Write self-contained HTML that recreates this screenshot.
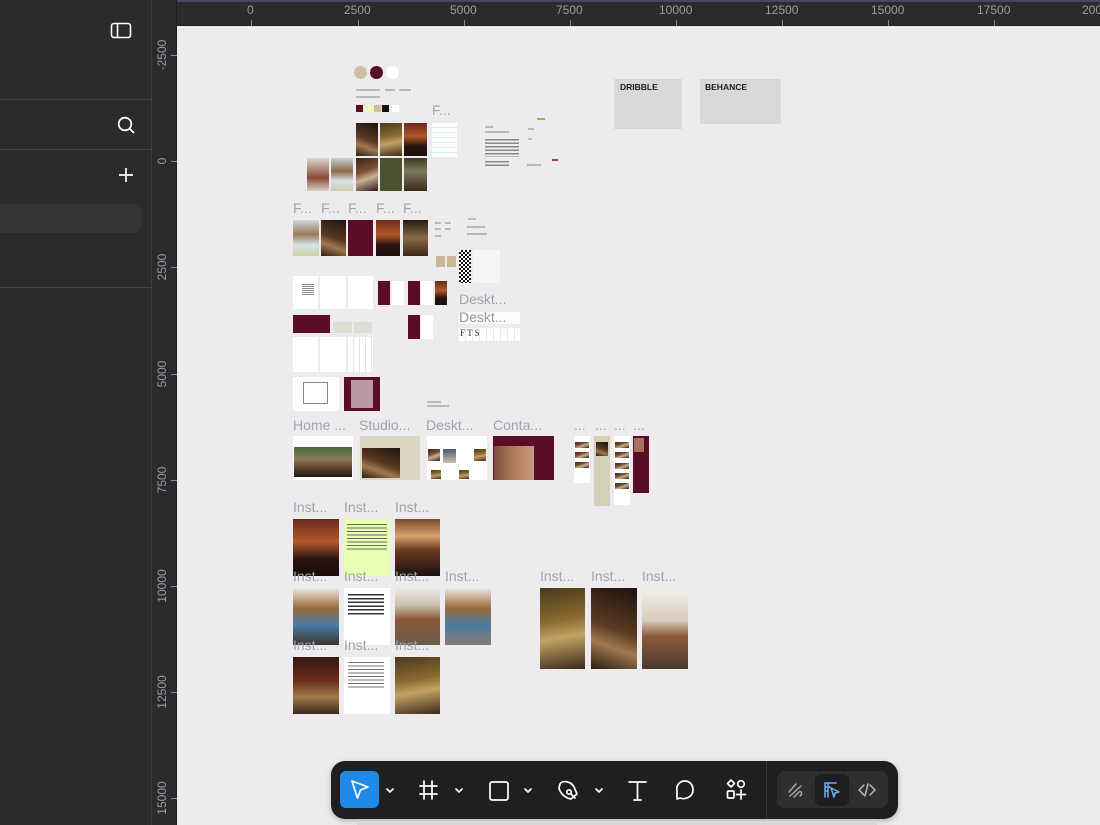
<!DOCTYPE html>
<html><head><meta charset="utf-8"><style>
*{margin:0;padding:0;box-sizing:border-box}
body{width:1100px;height:825px;overflow:hidden;background:#edebee;font-family:"Liberation Sans",sans-serif;position:relative}
.a{position:absolute}
.lbl{position:absolute;color:#a3a2a6;font-size:14px;line-height:14px;white-space:nowrap}
.w{background:#fff}
.m{background:#5b0d26}
.img1{background:linear-gradient(160deg,#3a2418,#7a5236 40%,#c9b092 60%,#2a1c14)}
.img2{background:linear-gradient(200deg,#1b130f,#5c3a22 50%,#a07850 70%,#2b1d14)}
.img3{background:linear-gradient(180deg,#6a2a1c,#b2582a 40%,#2a1410 70%,#1a0d0a)}
.img4{background:linear-gradient(180deg,#f2f0ec,#d9cdbb 40%,#8a5a36 60%,#4a3a30)}
.img5{background:linear-gradient(170deg,#4a3a1c,#8a6a30 40%,#c4a266 60%,#3a2a18)}
.tick{position:absolute;background:#8a898d}
.rt{position:absolute;color:#9d9ca0;font-size:12px;line-height:12px}
.tx{position:absolute;height:2px;background:#b9b7ba}
</style></head><body>
<!-- left panel -->
<div class="a" style="left:0;top:0;width:152px;height:825px;background:#2b2a2d;border-right:1px solid #3c3b3e"></div>
<div class="a" style="left:0;top:99px;width:151px;height:1px;background:#444347"></div>
<div class="a" style="left:0;top:149px;width:151px;height:1px;background:#444347"></div>
<div class="a" style="left:0;top:287px;width:151px;height:1px;background:#444347"></div>
<div class="a" style="left:0;top:204px;width:141px;height:29px;background:#353437;border-radius:0 7px 7px 0"></div>
<svg class="a" style="left:110px;top:22px" width="22" height="17" viewBox="0 0 22 17"><rect x="1.5" y="1.5" width="19" height="14" rx="2.5" fill="none" stroke="#fff" stroke-width="1.6"/><line x1="7.5" y1="2" x2="7.5" y2="15" stroke="#fff" stroke-width="1.6"/></svg>
<svg class="a" style="left:116px;top:115px" width="20" height="20" viewBox="0 0 20 20"><circle cx="9" cy="9" r="6.3" fill="none" stroke="#fff" stroke-width="1.8"/><line x1="13.5" y1="13.5" x2="17.5" y2="17.5" stroke="#fff" stroke-width="1.8" stroke-linecap="round"/></svg>
<svg class="a" style="left:117px;top:166px" width="18" height="18" viewBox="0 0 18 18"><path d="M9 2V16M2 9H16" stroke="#fff" stroke-width="1.7"/></svg>
<!-- rulers -->
<div class="a" style="left:152px;top:0;width:948px;height:26px;background:#2b2a2d;border-bottom:1px solid #1d1c1f"></div>
<div class="a" style="left:152px;top:0;width:25px;height:825px;background:#2b2a2d;border-right:1px solid #1d1c1f"></div>
<div class="a" style="left:177px;top:0;width:923px;height:2px;background:#4a4560"></div>
<div class="rt" style="left:247px;top:4px">0</div><div class="tick" style="left:251px;top:20px;width:1px;height:6px"></div>
<div class="rt" style="left:344px;top:4px">2500</div><div class="tick" style="left:358px;top:20px;width:1px;height:6px"></div>
<div class="rt" style="left:450px;top:4px">5000</div><div class="tick" style="left:464px;top:20px;width:1px;height:6px"></div>
<div class="rt" style="left:556px;top:4px">7500</div><div class="tick" style="left:570px;top:20px;width:1px;height:6px"></div>
<div class="rt" style="left:659px;top:4px">10000</div><div class="tick" style="left:676px;top:20px;width:1px;height:6px"></div>
<div class="rt" style="left:765px;top:4px">12500</div><div class="tick" style="left:782px;top:20px;width:1px;height:6px"></div>
<div class="rt" style="left:871px;top:4px">15000</div><div class="tick" style="left:888px;top:20px;width:1px;height:6px"></div>
<div class="rt" style="left:977px;top:4px">17500</div><div class="tick" style="left:994px;top:20px;width:1px;height:6px"></div>
<div class="rt" style="left:1082px;top:4px">20000</div>
<div class="rt" style="left:142px;top:49px;transform:rotate(-90deg);width:40px;text-align:center">-2500</div><div class="tick" style="left:171px;top:55px;width:6px;height:1px"></div>
<div class="rt" style="left:142px;top:155px;transform:rotate(-90deg);width:40px;text-align:center">0</div><div class="tick" style="left:171px;top:161px;width:6px;height:1px"></div>
<div class="rt" style="left:142px;top:261px;transform:rotate(-90deg);width:40px;text-align:center">2500</div><div class="tick" style="left:171px;top:267px;width:6px;height:1px"></div>
<div class="rt" style="left:142px;top:368px;transform:rotate(-90deg);width:40px;text-align:center">5000</div><div class="tick" style="left:171px;top:374px;width:6px;height:1px"></div>
<div class="rt" style="left:142px;top:474px;transform:rotate(-90deg);width:40px;text-align:center">7500</div><div class="tick" style="left:171px;top:480px;width:6px;height:1px"></div>
<div class="rt" style="left:142px;top:580px;transform:rotate(-90deg);width:40px;text-align:center">10000</div><div class="tick" style="left:171px;top:586px;width:6px;height:1px"></div>
<div class="rt" style="left:142px;top:686px;transform:rotate(-90deg);width:40px;text-align:center">12500</div><div class="tick" style="left:171px;top:692px;width:6px;height:1px"></div>
<div class="rt" style="left:142px;top:792px;transform:rotate(-90deg);width:40px;text-align:center">15000</div><div class="tick" style="left:171px;top:798px;width:6px;height:1px"></div>

<!-- canvas: brand -->
<div class="a" style="left:354px;top:66px;width:13px;height:13px;border-radius:50%;background:#cdbf9f"></div>
<div class="a" style="left:370px;top:66px;width:13px;height:13px;border-radius:50%;background:#5b0d26"></div>
<div class="a" style="left:386px;top:66px;width:13px;height:13px;border-radius:50%;background:#fff"></div>
<div class="tx" style="left:356px;top:89px;width:24px"></div><div class="tx" style="left:385px;top:89px;width:10px"></div><div class="tx" style="left:399px;top:89px;width:12px"></div>
<div class="tx" style="left:356px;top:96px;width:24px"></div>
<div class="a m" style="left:356px;top:105px;width:7px;height:7px"></div>
<div class="a" style="left:366px;top:105px;width:7px;height:7px;background:#e8ffb0"></div>
<div class="a" style="left:374px;top:105px;width:7px;height:7px;background:#cdbf9f"></div>
<div class="a" style="left:382px;top:105px;width:7px;height:7px;background:#111"></div>
<div class="a w" style="left:392px;top:105px;width:7px;height:7px"></div>
<div class="lbl" style="left:432px;top:103px">F...</div>
<div class="a img2" style="left:356px;top:123px;width:22px;height:33px"></div>
<div class="a img5" style="left:380px;top:123px;width:22px;height:33px"></div>
<div class="a img3" style="left:404px;top:123px;width:23px;height:33px"></div>
<div class="a img4" style="left:307px;top:158px;width:22px;height:33px;background:linear-gradient(180deg,#ddd6cc,#8a4a36 60%,#d8d0c4)"></div>
<div class="a" style="left:331px;top:158px;width:22px;height:33px;background:linear-gradient(180deg,#c8d2d6,#8a6a4a 40%,#d8e2e6 70%,#d0c8b0)"></div>
<div class="a img1" style="left:356px;top:158px;width:22px;height:33px"></div>
<div class="a" style="left:380px;top:158px;width:22px;height:33px;background:#4a5230"></div>
<div class="a img3" style="left:404px;top:158px;width:23px;height:33px;background:linear-gradient(180deg,#3a3a2a,#7a7a5a 40%,#3a2a1a)"></div>
<div class="a" style="left:432px;top:123px;width:25px;height:34px;background:repeating-linear-gradient(0deg,#fff 0 4px,#d6ecee 4px 5px),#fff"></div>
<div class="tx" style="left:485px;top:126px;width:8px"></div>
<div class="tx" style="left:485px;top:131px;width:24px"></div>
<div class="a" style="left:485px;top:139px;width:34px;height:18px;background:repeating-linear-gradient(180deg,#8a898c 0 1.5px,transparent 1.5px 3.5px)"></div>
<div class="a" style="left:485px;top:161px;width:24px;height:6px;background:repeating-linear-gradient(180deg,#8a898c 0 1.5px,transparent 1.5px 3.5px)"></div>
<div class="tx" style="left:537px;top:118px;width:8px;background:#9cb050"></div>
<div class="tx" style="left:528px;top:128px;width:6px"></div>
<div class="tx" style="left:528px;top:138px;width:4px"></div>
<div class="tx" style="left:552px;top:159px;width:6px;background:#a04060"></div>
<div class="tx" style="left:527px;top:164px;width:14px"></div>
<div class="a" style="left:614px;top:79px;width:68px;height:50px;background:#dad8db"></div>
<div class="a" style="left:620px;top:82px;font-size:8.5px;font-weight:bold;color:#1a1a1a">DRIBBLE</div>
<div class="a" style="left:700px;top:79px;width:81px;height:45px;background:#dad8db"></div>
<div class="a" style="left:705px;top:82px;font-size:8.5px;font-weight:bold;color:#1a1a1a">BEHANCE</div>

<!-- F row -->
<div class="lbl" style="left:293px;top:201px">F...</div><div class="lbl" style="left:321px;top:201px">F...</div><div class="lbl" style="left:348px;top:201px">F...</div><div class="lbl" style="left:376px;top:201px">F...</div><div class="lbl" style="left:403px;top:201px">F...</div>
<div class="a" style="left:293px;top:220px;width:26px;height:36px;background:linear-gradient(180deg,#cfd8dc,#9a7a58 40%,#d8e4e8 70%,#c8d0a0)"></div>
<div class="a img2" style="left:321px;top:220px;width:25px;height:36px"></div>
<div class="a m" style="left:348px;top:220px;width:25px;height:36px"></div>
<div class="a img3" style="left:376px;top:220px;width:24px;height:36px"></div>
<div class="a img5" style="left:403px;top:220px;width:25px;height:36px;background:linear-gradient(180deg,#2a1a12,#8a6a40 50%,#3a2818)"></div>
<div class="tx" style="left:435px;top:222px;width:6px"></div><div class="tx" style="left:445px;top:222px;width:6px"></div><div class="tx" style="left:468px;top:218px;width:8px"></div>
<div class="tx" style="left:435px;top:228px;width:6px"></div><div class="tx" style="left:445px;top:228px;width:6px"></div><div class="tx" style="left:467px;top:226px;width:18px"></div>
<div class="tx" style="left:435px;top:235px;width:6px"></div><div class="tx" style="left:467px;top:233px;width:20px"></div>
<div class="a" style="left:436px;top:256px;width:9px;height:11px;background:#c8b894"></div>
<div class="a" style="left:447px;top:256px;width:9px;height:11px;background:#c8b894"></div>
<div class="a" style="left:459px;top:250px;width:12px;height:33px;background:repeating-conic-gradient(#111 0 25%,#fff 0 50%) 0 0/4px 4px"></div>
<div class="a" style="left:473px;top:250px;width:27px;height:33px;background:#f6f4f6"></div>

<div class="a w" style="left:293px;top:276px;width:25px;height:33px"></div>
<div class="a" style="left:302px;top:284px;width:12px;height:12px;background:repeating-linear-gradient(180deg,#888 0 1px,transparent 1px 2px)"></div>
<div class="a w" style="left:320px;top:276px;width:26px;height:33px"></div>
<div class="a w" style="left:348px;top:276px;width:25px;height:33px"></div>
<div class="a m" style="left:378px;top:281px;width:12px;height:24px"></div><div class="a w" style="left:392px;top:281px;width:12px;height:24px"></div>
<div class="a m" style="left:408px;top:281px;width:12px;height:24px"></div><div class="a w" style="left:421px;top:281px;width:12px;height:24px"></div>
<div class="a img3" style="left:435px;top:281px;width:12px;height:24px"></div>
<div class="lbl" style="left:459px;top:292px">Deskt...</div>
<div class="a w" style="left:459px;top:312px;width:61px;height:12px;opacity:.8"></div>
<div class="lbl" style="left:459px;top:310px;color:#999">Deskt...</div>
<div class="a" style="left:459px;top:328px;width:61px;height:13px;background:repeating-linear-gradient(90deg,#fff 0 6px,#ebe9ec 6px 7px)"></div>
<div class="a" style="left:460px;top:328px;font-size:9px;font-family:'Liberation Serif',serif;color:#333">F T S</div>
<div class="a m" style="left:293px;top:315px;width:37px;height:18px"></div>
<div class="a" style="left:333px;top:322px;width:19px;height:11px;background:#dedcd6"></div>
<div class="a" style="left:354px;top:322px;width:18px;height:11px;background:#dedcd6"></div>
<div class="a m" style="left:408px;top:315px;width:12px;height:24px"></div><div class="a w" style="left:421px;top:315px;width:12px;height:24px"></div>
<div class="a w" style="left:293px;top:337px;width:25px;height:35px"></div>
<div class="a w" style="left:320px;top:337px;width:26px;height:35px"></div>
<div class="a" style="left:348px;top:337px;width:25px;height:35px;background:repeating-linear-gradient(90deg,#fff 0 5px,#f0dde2 5px 6px),#fff"></div>
<div class="a w" style="left:293px;top:377px;width:46px;height:34px;border:0"></div>
<div class="a" style="left:303px;top:382px;width:25px;height:22px;border:1px solid #888"></div>
<div class="a m" style="left:344px;top:377px;width:36px;height:34px"></div>
<div class="a" style="left:351px;top:380px;width:22px;height:28px;background:#b89aa6"></div>
<div class="tx" style="left:427px;top:401px;width:14px"></div><div class="tx" style="left:427px;top:405px;width:22px"></div>

<!-- pages -->
<div class="lbl" style="left:293px;top:418px">Home ...</div>
<div class="lbl" style="left:359px;top:418px">Studio...</div>
<div class="lbl" style="left:426px;top:418px">Deskt...</div>
<div class="lbl" style="left:493px;top:418px">Conta...</div>
<div class="lbl" style="left:574px;top:418px">...</div><div class="lbl" style="left:595px;top:418px">...</div><div class="lbl" style="left:614px;top:418px">...</div><div class="lbl" style="left:633px;top:418px">...</div>
<div class="a w" style="left:293px;top:436px;width:60px;height:44px"></div>
<div class="a" style="left:294px;top:447px;width:58px;height:30px;background:linear-gradient(180deg,#4a6a3a,#8a7a58 40%,#6a4a30 65%,#1e1a18)"></div>
<div class="a" style="left:360px;top:436px;width:60px;height:44px;background:#ddd6c4"></div>
<div class="a img2" style="left:362px;top:448px;width:38px;height:30px"></div>
<div class="a w" style="left:427px;top:436px;width:60px;height:44px"></div>
<div class="a img1" style="left:428px;top:449px;width:12px;height:12px"></div><div class="a" style="left:443px;top:449px;width:13px;height:14px;background:linear-gradient(#4a5a6a,#c8c0b0)"></div><div class="a img5" style="left:474px;top:449px;width:12px;height:12px"></div>
<div class="a img5" style="left:431px;top:470px;width:10px;height:9px"></div><div class="a img5" style="left:459px;top:470px;width:10px;height:9px"></div>
<div class="a m" style="left:493px;top:436px;width:61px;height:44px"></div>
<div class="a" style="left:494px;top:446px;width:40px;height:34px;background:linear-gradient(90deg,#7a5040,#b07a5a,#c89a80)"></div>
<div class="a w" style="left:574px;top:436px;width:16px;height:47px"></div>
<div class="a img1" style="left:575px;top:442px;width:14px;height:6px"></div><div class="a img1" style="left:575px;top:452px;width:14px;height:6px"></div><div class="a img1" style="left:575px;top:462px;width:14px;height:6px"></div>
<div class="a" style="left:594px;top:436px;width:16px;height:70px;background:#d6cfba"></div>
<div class="a img2" style="left:596px;top:442px;width:12px;height:14px"></div>
<div class="a w" style="left:614px;top:436px;width:16px;height:69px"></div>
<div class="a img1" style="left:615px;top:442px;width:14px;height:6px"></div><div class="a img1" style="left:615px;top:452px;width:14px;height:6px"></div><div class="a img1" style="left:615px;top:463px;width:14px;height:6px"></div><div class="a img1" style="left:615px;top:473px;width:14px;height:6px"></div><div class="a img1" style="left:615px;top:483px;width:14px;height:6px"></div>
<div class="a m" style="left:633px;top:436px;width:16px;height:57px"></div>
<div class="a" style="left:634px;top:438px;width:10px;height:14px;background:#a87060"></div>

<!-- Inst -->
<div class="lbl" style="left:293px;top:500px">Inst...</div><div class="lbl" style="left:344px;top:500px">Inst...</div><div class="lbl" style="left:395px;top:500px">Inst...</div>
<div class="a img3" style="left:293px;top:519px;width:46px;height:57px"></div>
<div class="a" style="left:344px;top:519px;width:46px;height:57px;background:#e6ffb0"></div>
<div class="a" style="left:347px;top:524px;width:40px;height:28px;background:repeating-linear-gradient(180deg,#6a6a5a 0 1px,transparent 1px 3.5px)"></div>
<div class="a img3" style="left:395px;top:519px;width:45px;height:57px;background:linear-gradient(180deg,#7a4a2a,#d8a070 30%,#6a3a20 55%,#1a1010)"></div>
<div class="lbl" style="left:293px;top:569px">Inst...</div><div class="lbl" style="left:344px;top:569px">Inst...</div><div class="lbl" style="left:395px;top:569px">Inst...</div><div class="lbl" style="left:445px;top:569px">Inst...</div>
<div class="lbl" style="left:540px;top:569px">Inst...</div><div class="lbl" style="left:591px;top:569px">Inst...</div><div class="lbl" style="left:642px;top:569px">Inst...</div>
<div class="a img4" style="left:293px;top:588px;width:46px;height:57px;background:linear-gradient(180deg,#efece8,#9a6a3a 35%,#4a7aa0 65%,#3a3430)"></div>
<div class="a w" style="left:344px;top:588px;width:46px;height:57px"></div>
<div class="a" style="left:348px;top:594px;width:36px;height:22px;background:repeating-linear-gradient(180deg,#333 0 1.5px,transparent 1.5px 3.8px)"></div>
<div class="a img4" style="left:395px;top:588px;width:45px;height:57px;background:linear-gradient(180deg,#efece8,#c8c0b0 30%,#8a5a36 55%,#6a5a50)"></div>
<div class="a img4" style="left:445px;top:588px;width:46px;height:57px;background:linear-gradient(180deg,#efece8,#9a6a3a 35%,#4a7aa0 65%,#8a7a70)"></div>
<div class="a img5" style="left:540px;top:588px;width:45px;height:81px"></div>
<div class="a img2" style="left:591px;top:588px;width:46px;height:81px"></div>
<div class="a img4" style="left:642px;top:588px;width:46px;height:81px"></div>
<div class="lbl" style="left:293px;top:638px">Inst...</div><div class="lbl" style="left:344px;top:638px">Inst...</div><div class="lbl" style="left:395px;top:638px">Inst...</div>
<div class="a img3" style="left:293px;top:657px;width:46px;height:57px;background:linear-gradient(180deg,#3a1a14,#6a2a1a 40%,#a07a4a 70%,#3a2a1a)"></div>
<div class="a w" style="left:344px;top:657px;width:46px;height:57px"></div>
<div class="a" style="left:348px;top:662px;width:36px;height:26px;background:repeating-linear-gradient(180deg,#777 0 1px,transparent 1px 3.5px)"></div>
<div class="a img5" style="left:395px;top:657px;width:45px;height:57px"></div>

<!-- toolbar -->
<div class="a" style="left:331px;top:761px;width:567px;height:58px;background:#1f1e21;border-radius:14px;box-shadow:0 2px 6px rgba(0,0,0,.25)"></div>
<div class="a" style="left:340px;top:771px;width:39px;height:37px;background:#1f8ae9;border-radius:6px"></div>
<svg class="a" style="left:340px;top:771px" width="39" height="37" viewBox="0 0 39 37"><path d="M12 10L28 16L20.5 19L17.5 27Z" fill="none" stroke="#fff" stroke-width="1.7" stroke-linejoin="round"/></svg>
<svg class="a" style="left:331px;top:761px" width="567" height="58" viewBox="0 0 567 58" fill="none" stroke="#fff" stroke-width="1.7" stroke-linecap="round" stroke-linejoin="round">
<path d="M56 28l3 3 3-3M125 28l3 3 3-3M194 28l3 3 3-3M265 28l3 3 3-3"/>
<path d="M93 20V38M101 20V38M89 25H106M89 33H106"/>
<rect x="159" y="21" width="18" height="18" rx="2"/>
<path d="M229 23C231 19 240 20 243 26L246 33L240 38C234 37 229 32 228 27Z"/><circle cx="238" cy="31" r="2.2"/><path d="M240 33L244 37"/>
<path d="M298 21H315M306.5 21V39M303 39H310"/>
<path d="M346 38L349 37C354 39 362 36 362 29C362 23 358 20 354 20C348 20 345 25 346 30Z"/>
<path d="M400 19l3.5 3.5-3.5 3.5-3.5-3.5z"/><circle cx="410" cy="23" r="3.3"/><rect x="396.5" y="30" width="6.5" height="7" rx="1"/><path d="M410 29V38M405.5 33.5H414.5"/>
</svg>
<div class="a" style="left:766px;top:761px;width:1px;height:58px;background:#3a393c"></div>
<div class="a" style="left:777px;top:771px;width:111px;height:37px;background:#2f2e31;border-radius:8px"></div>
<div class="a" style="left:815px;top:774px;width:34px;height:32px;background:#1e1d20;border-radius:6px"></div>
<svg class="a" style="left:777px;top:771px" width="111" height="37" viewBox="0 0 111 37" fill="none" stroke-linecap="round" stroke-linejoin="round" stroke-width="1.5">
<path d="M12 21L19 13M13 25L24 15M17 26L22 21C24 19 26 23 23 25" stroke="#aaa"/>
<path d="M48 12H59M48 12V26M51 12V26M48 16H53M48 20H51M54 17L62 21L58 22L57 26Z" stroke="#6cb2ef"/>
<path d="M87 14L82 19L87 24M91 13L88 25M93 14L98 19L93 24" stroke="#bbb"/>
</svg>
<div class="a" style="left:357px;top:821px;width:520px;height:4px;background:#d8d6d9"></div>
</body></html>
